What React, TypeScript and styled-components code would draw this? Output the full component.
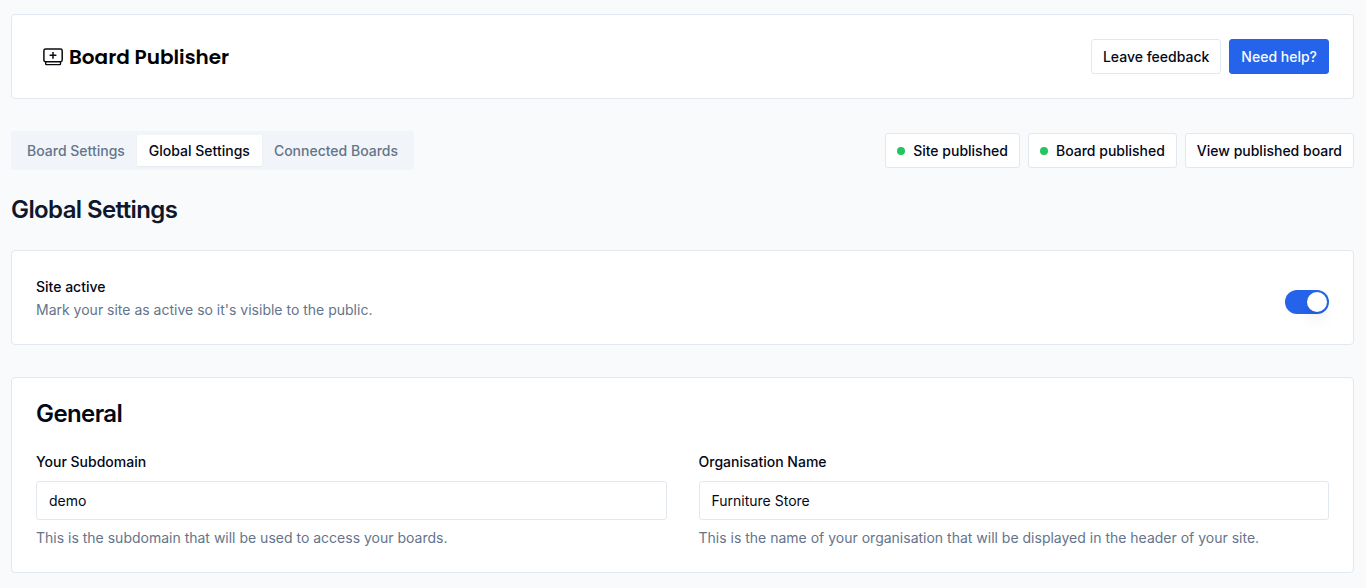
import React, { useState } from "react";
import styled, { createGlobalStyle } from "styled-components";

const GlobalStyle = createGlobalStyle`
  *, *::before, *::after { box-sizing: border-box; }
  body {
    margin: 0;
    background: #f8fafc;
    color: #020817;
    font-family: Inter, "Liberation Sans", sans-serif;
    font-size: 14px;
    line-height: 20px;
  }
  h1, h2, p { margin: 0; }
  button, input { font: inherit; color: inherit; }
`;

const Page = styled.main`
  padding: 14px 12px 15px 11px;
`;

const Card = styled.section`
  background: #fff;
  border: 1px solid #e2e8f0;
  border-radius: 4px;
  padding: 24px;
`;

const Row = styled.div`
  display: flex;
  align-items: center;
  justify-content: space-between;
  gap: 24px;
`;

const Header = styled(Card).attrs({ as: "header" })`
  display: flex;
  align-items: center;
  justify-content: space-between;
  padding: 24px 24px 24px 31px;
`;

const Brand = styled.a`
  display: flex;
  align-items: center;
  gap: 6px;
  color: #000;
  text-decoration: none;
  font-family: Poppins, Inter, sans-serif;
  font-size: 20px;
  font-weight: 600;
  line-height: 28px;
`;

const Actions = styled.div`
  display: flex;
  gap: 8px;
`;

const Button = styled.button<{ $primary?: boolean }>`
  display: inline-flex;
  align-items: center;
  gap: 8px;
  height: 35px;
  padding: 0 11px;
  border: 1px solid ${(p) => (p.$primary ? "#2563eb" : "#e2e8f0")};
  border-radius: 3px;
  background: ${(p) => (p.$primary ? "#2563eb" : "#fff")};
  color: ${(p) => (p.$primary ? "#f8fafc" : "#020817")};
  font-weight: 500;
  white-space: nowrap;
  cursor: pointer;
`;

const Dot = styled.span`
  width: 8px;
  height: 8px;
  border-radius: 50%;
  background: #22c55e;
`;

const Toolbar = styled(Row)`
  margin-top: 32px;
`;

const Tabs = styled.div`
  display: flex;
  padding: 4px;
  border-radius: 3px;
  background: #f1f5f9;
`;

const Tab = styled.button<{ $active: boolean }>`
  height: 31px;
  padding: 0 12px;
  border: 0;
  border-radius: 1px;
  background: ${(p) => (p.$active ? "#fff" : "transparent")};
  box-shadow: ${(p) => (p.$active ? "0 1px 2px rgba(0, 0, 0, 0.05)" : "none")};
  color: ${(p) => (p.$active ? "#020817" : "#64748b")};
  font-weight: 500;
  cursor: pointer;
`;

const PageTitle = styled.h1`
  margin: 24px 0;
  font-size: 24px;
  line-height: 32px;
  font-weight: 600;
  letter-spacing: -0.025em;
  color: #0f172a;
`;

const CardTitle = styled.h2`
  font-size: 24px;
  line-height: 24px;
  font-weight: 600;
  letter-spacing: -0.025em;
`;

const Label = styled.label`
  display: block;
  font-weight: 500;
`;

const Hint = styled.p`
  color: #64748b;
`;

const Setting = styled.div`
  display: grid;
  gap: 1px;

  ${Label} { line-height: 24px; }
`;

const Switch = styled.input`
  appearance: none;
  flex: none;
  width: 44px;
  height: 24px;
  margin: 8px 0 0;
  padding: 2px;
  border-radius: 12px;
  background: #cbd5e1;
  cursor: pointer;

  &::before {
    content: "";
    display: block;
    width: 20px;
    height: 20px;
    border-radius: 50%;
    background: #fff;
    box-shadow: 0 10px 15px -3px rgba(0, 0, 0, 0.1), 0 4px 6px -4px rgba(0, 0, 0, 0.1);
  }
  &:checked { background: #2563eb; }
  &:checked::before { margin-left: 20px; }
`;

const Fields = styled.div`
  display: grid;
  grid-template-columns: 1fr 1fr;
  gap: 32px;
  margin-top: 26px;
`;

const Input = styled.input`
  display: block;
  width: 100%;
  height: 39px;
  margin: 9px 0 8px;
  padding: 0 12px;
  border: 1px solid #e2e8f0;
  border-radius: 3px;
  background: #fff;
`;

const General = styled(Card)`
  margin-top: 32px;
`;

const tabs = ["Board Settings", "Global Settings", "Connected Boards"];

function Logo() {
  return (
    <svg width="20" height="18" viewBox="0 0 20 18" fill="none" stroke="#0b0b12" strokeWidth="1.5" aria-hidden="true">
      <rect x="0.9" y="1" width="18.300" height="12.700" rx="1.700" />
      <path d="M10 3.900v6.800M6.600 7.300h6.800" />
      <path d="M2.700 13.700v2.200q0 .7.7.7h13.400q.7 0 .7-.7v-2.200" strokeWidth="1.400" />
    </svg>
  );
}

export default function App() {
  const [tab, setTab] = useState(tabs[1]);
  const [active, setActive] = useState(true);
  return (
    <>
      <GlobalStyle />
      <Page>
        <Header>
          <Brand href="#"><Logo />Board Publisher</Brand>
          <Actions>
            <Button>Leave feedback</Button>
            <Button $primary>Need help?</Button>
          </Actions>
        </Header>
        <Toolbar>
          <Tabs role="tablist">
            {tabs.map((t) => (
              <Tab key={t} role="tab" aria-selected={t === tab} $active={t === tab} onClick={() => setTab(t)}>{t}</Tab>
            ))}
          </Tabs>
          <Actions>
            <Button><Dot />Site published</Button>
            <Button><Dot />Board published</Button>
            <Button>View published board</Button>
          </Actions>
        </Toolbar>
        <PageTitle>Global Settings</PageTitle>
        <Card>
          <Row>
            <Setting>
              <Label htmlFor="active">Site active</Label>
              <Hint>Mark your site as active so it's visible to the public.</Hint>
            </Setting>
            <Switch id="active" type="checkbox" role="switch" checked={active} onChange={(e) => setActive(e.target.checked)} />
          </Row>
        </Card>
        <General>
          <CardTitle>General</CardTitle>
          <Fields>
            <div>
              <Label htmlFor="subdomain">Your Subdomain</Label>
              <Input id="subdomain" defaultValue="demo" />
              <Hint>This is the subdomain that will be used to access your boards.</Hint>
            </div>
            <div>
              <Label htmlFor="organisation">Organisation Name</Label>
              <Input id="organisation" defaultValue="Furniture Store" />
              <Hint>This is the name of your organisation that will be displayed in the header of your site.</Hint>
            </div>
          </Fields>
        </General>
      </Page>
    </>
  );
}
